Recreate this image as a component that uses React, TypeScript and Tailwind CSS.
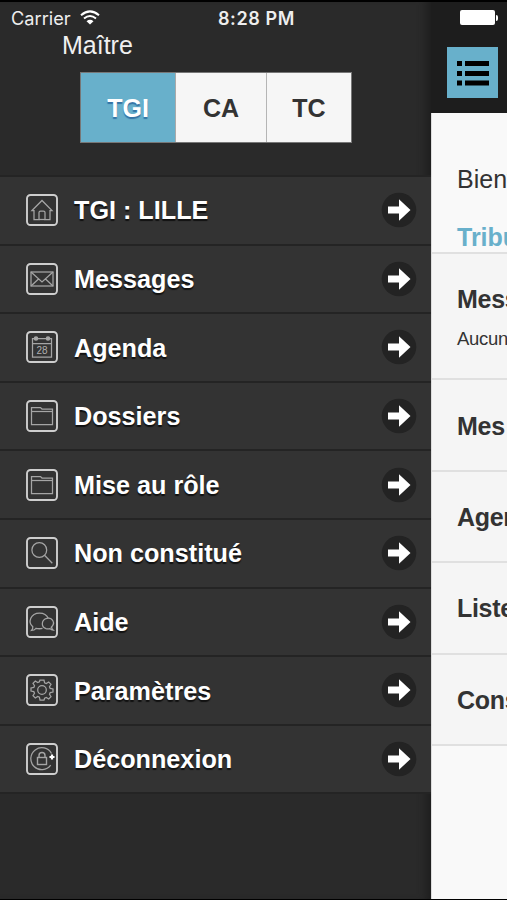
import type { ReactNode } from "react";

const courts = [
  { label: "TGI", className: "w-[95px] bg-[#68b0cb] text-white [text-shadow:0_2px_1px_#3373a5]" },
  { label: "CA", className: "w-[91px] border-l border-[#aaa] bg-[#f6f6f6] text-[#333]" },
  { label: "TC", className: "w-[86px] border-l border-[#b5b5b5] bg-[#f6f6f6] text-[#333]" },
];

const FolderIcon = () => (
  <>
    <path d="M5.500 24.500V7.500h9l1.500 1.500h10.500v15.500z" />
    <path d="M5.500 11.500h21" />
  </>
);

const menu: { label: string; icon: ReactNode }[] = [
  {
    label: "TGI : LILLE",
    icon: (
      <>
        <path d="M6 16.500 16 6.500l10 10h-2v9h-5v-7q0-1.500-1.500-1.500h-3q-1.500 0-1.500 1.500v7H8v-9z" />
        <path d="M13 25.500h6" />
      </>
    ),
  },
  {
    label: "Messages",
    icon: (
      <>
        <rect x="5" y="9" width="22" height="14" />
        <path d="m5 9 11 10L27 9M5 23l7.500-7M27 23l-7.500-7" />
      </>
    ),
  },
  {
    label: "Agenda",
    icon: (
      <>
        <path d="M8.500 7.500h-2V26h19V7.500h-2M12 7.500h8M6.500 12.500h19" />
        <circle cx="10" cy="7.500" r="1.700" fill="#aaa" />
        <circle cx="22" cy="7.500" r="1.700" fill="#aaa" />
        <text x="16" y="22.800" textAnchor="middle" fontSize="10" fill="#b0b0b0" stroke="none">
          28
        </text>
      </>
    ),
  },
  { label: "Dossiers", icon: <FolderIcon /> },
  { label: "Mise au rôle", icon: <FolderIcon /> },
  {
    label: "Non constitué",
    icon: (
      <>
        <circle cx="13.300" cy="13" r="7.400" />
        <path d="m18.500 18.200 7.800 8" />
      </>
    ),
  },
  {
    label: "Aide",
    icon: (
      <>
        <path d="M16.500 22.300q-3 .9-6.500 0-1.700 2-4.500 2.200 1.500-1.800 1.300-3.800C1.500 16.500 4.500 7 13.500 7c4.500 0 7.500 2.200 8.700 5.300" />
        <path d="M24.800 21.700c5.700-4.500 1.200-10.700-4-9.400-5.300 1.300-6.300 8.400-.8 10.400 1.600.5 2.800.3 4 0 .8.900 2 1.500 3.300 1.500-1.300-1-1.800-1.600-1.500-3" />
      </>
    ),
  },
  {
    label: "Paramètres",
    icon: (
      <>
        <circle cx="16" cy="16" r="4.300" />
        <path d="m14 6h4l.6 2.800 1.700.7 2.400-1.500 2.300 2.300-1.500 2.400.7 1.700 2.800.6v3l-2.800.6-.7 1.700 1.500 2.400-2.300 2.300-2.400-1.500-1.700.7L18 26h-4l-.6-2.800-1.700-.7L9.300 24 7 21.700l1.500-2.400-.7-1.700L5 17v-3l2.800-.6.7-1.700L7 9.300 9.300 7l2.400 1.500 1.700-.7z" />
      </>
    ),
  },
  {
    label: "Déconnexion",
    icon: (
      <>
        <path d="M24.700 22.200A11 11 0 1 1 25.500 10.500" />
        <rect x="11.500" y="14.500" width="9" height="7" strokeWidth="1.400" />
        <path d="M13 14.500v-2a3 3 0 0 1 6 0v2" strokeWidth="1.400" />
        <path d="M23.500 14h5M26 11.500v5" stroke="#fff" strokeWidth="2.200" />
      </>
    ),
  },
];

const cards = [
  { label: "Messages", note: "Aucun nouveau message", className: "h-[126px] pt-[30px]" },
  { label: "Mes dossiers", className: "h-[92px] pt-[31px]" },
  { label: "Agenda", className: "h-[91px] pt-[30px]" },
  { label: "Liste", className: "h-[92px] pt-[30px]" },
  { label: "Constitutions", className: "h-[91px] pt-[30px]" },
];

const MenuIcon = ({ children }: { children: ReactNode }) => (
  <svg viewBox="0 0 32 32" className="size-8 shrink-0" fill="none" stroke="#a5a5a5" strokeWidth="1.250">
    <rect x="1" y="1" width="30" height="30" rx="3.500" stroke="#cecece" strokeWidth="1.900" />
    {children}
  </svg>
);

const ArrowBadge = () => (
  <svg viewBox="0 0 36 36" className="size-9 shrink-0">
    <circle cx="18" cy="18" r="17.300" fill="#232323" />
    <path d="M7 14.500h11V7.300L29.500 18 18 28.700v-7.200H7z" fill="#fff" />
  </svg>
);

const StatusBar = () => (
  <div className="absolute inset-x-0 top-0 z-10 grid h-9 grid-cols-[207px_1fr_auto] items-center border-t-2 border-black pr-[9px] pl-[11px] font-[Inter,sans-serif] text-[#eee]">
    <div className="flex items-center gap-[9px]">
      <span className="text-[18.200px]">Carrier</span>
      <svg viewBox="0 0 20 15" className="mb-[3px] h-[15px] w-5" fill="none" stroke="#fff" strokeWidth="2">
        <path d="M1 5.200q9-7.600 18 0M4 8.500q6-5 12 0" />
        <path d="M6.500 11.200q3.500-2.800 7 0L10 14.600z" fill="#fff" stroke="none" />
      </svg>
    </div>
    <span className="mb-[2px] text-[18px] font-semibold tracking-[0.6px]">8:28 PM</span>
    <div className="mb-[3px] flex items-center">
      <div className="h-[15px] w-[35px] rounded-[2px] bg-white" />
      <div className="ml-px h-[6px] w-[2px] rounded-r bg-white" />
    </div>
  </div>
);

const Sidebar = () => (
  <aside className="flex w-[431px] shrink-0 flex-col bg-[#2a2a2a] shadow-[inset_-10px_0_10px_-6px_#1d1d1d]">
    <div className="h-[175px] pt-[30px]">
      <p className="pl-[62px] text-[25px] leading-[30px] text-[#f0f0f0]">Maître</p>
      <div className="mt-[12px] ml-[80px] flex h-[71px] w-[272px] border border-[#777]">
        {courts.map((court) => (
          <button
            key={court.label}
            className={`flex items-center justify-center pt-[2px] text-[25px] font-bold ${court.className}`}
          >
            {court.label}
          </button>
        ))}
      </div>
    </div>
    <nav className="border-t-2 border-[#242424]">
      {menu.map((item) => (
        <a
          key={item.label}
          className="flex h-[68.600px] items-center border-b-2 border-[#242424] bg-[#333] pr-[14px] pl-[26px]"
        >
          <MenuIcon>{item.icon}</MenuIcon>
          <span className="ml-4 flex-1 pt-[2px] text-[25.200px] font-bold text-white [text-shadow:0_2px_1px_#111]">
            {item.label}
          </span>
          <ArrowBadge />
        </a>
      ))}
    </nav>
  </aside>
);

const Content = () => (
  <main className="w-[360px] shrink-0 border-l border-[#ddd] bg-[#f9f9f9] text-[#333]">
    <header className="-ml-px h-[113px] bg-[#1d1d1d] pt-[47px] pl-[16px]">
      <div className="flex size-[51px] items-center justify-center bg-[#68b0cb]">
        <svg viewBox="0 0 32 25" className="mt-px h-[25px] w-8" fill="#000">
          <path d="M0 0h5v5H0zM8 0h24v5H8zM0 10h5v5H0zM8 10h24v5H8zM0 19.500h5v5H0zM8 19.500h24v5H8z" />
        </svg>
      </div>
    </header>
    <div className="h-[141px] border-b-2 border-[#e0e0e0] pt-[51px] pl-[25px] whitespace-nowrap">
      <p className="text-[25px] leading-[30px]">Bienvenue</p>
      <p className="mt-[28px] text-[25px] leading-[30px] font-bold text-[#68b0cb]">Tribunal</p>
    </div>
    {cards.map((card) => (
      <section
        key={card.label}
        className={`border-b-2 border-[#e0e0e0] bg-[#f5f5f5] pl-[25px] whitespace-nowrap ${card.className}`}
      >
        <h2 className="text-[25px] leading-[30px] font-bold tracking-[-0.3px]">{card.label}</h2>
        {card.note && <p className="mt-[13px] text-[18.500px] leading-[24px] tracking-[-0.3px]">{card.note}</p>}
      </section>
    ))}
  </main>
);

export default function App() {
  return (
    <div className="relative flex h-[900px] w-[507px] overflow-hidden border-b border-black bg-[#2a2a2a] font-['Liberation_Sans',Arial,sans-serif]">
      <StatusBar />
      <Sidebar />
      <Content />
    </div>
  );
}
